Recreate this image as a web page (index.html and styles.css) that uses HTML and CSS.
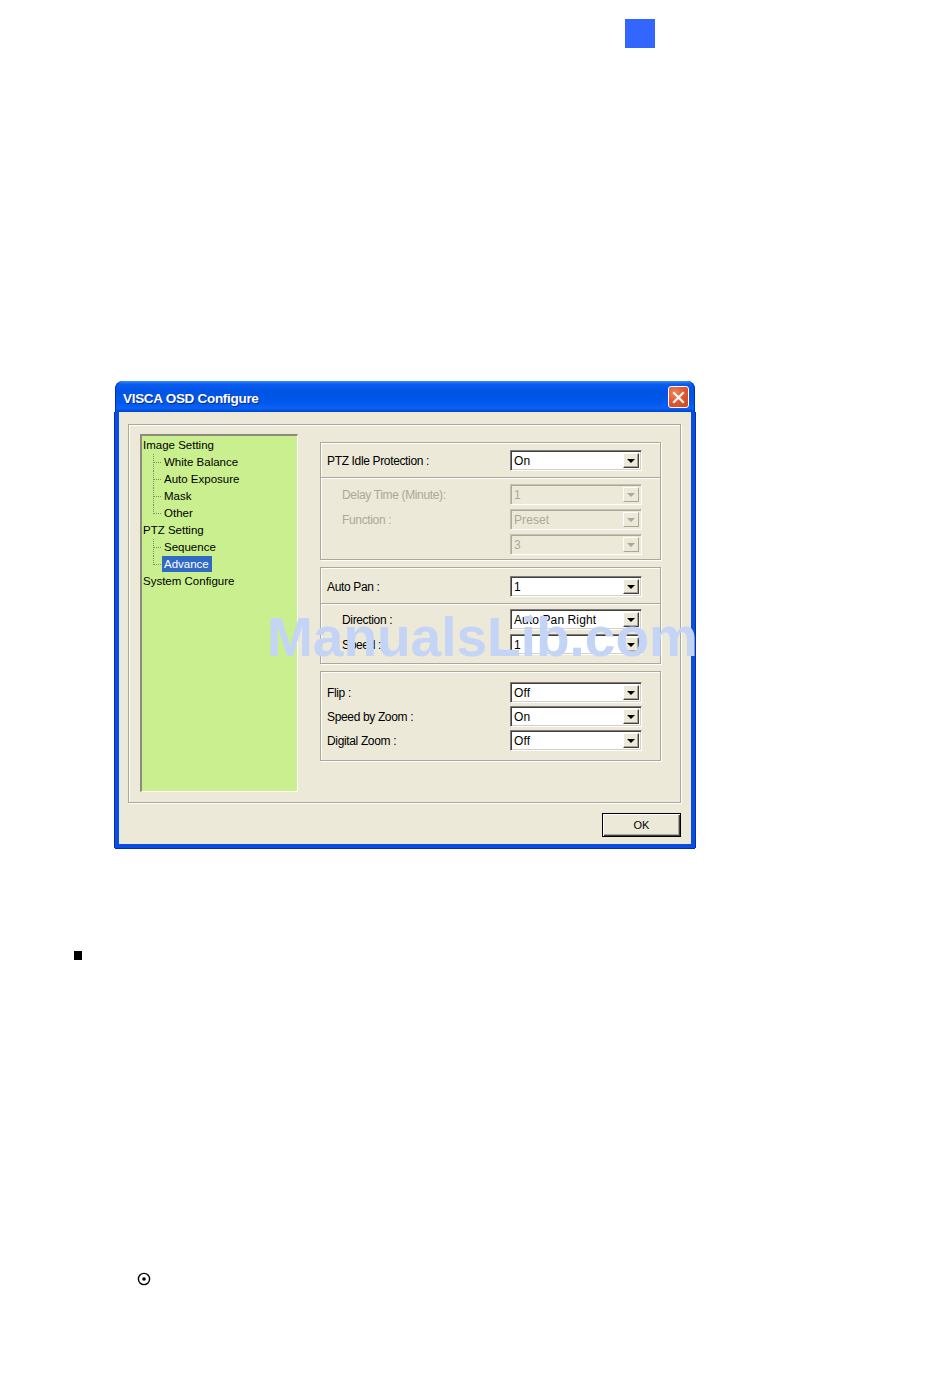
FILE: index.html
```html
<!DOCTYPE html>
<html>
<head>
<meta charset="utf-8">
<title>VISCA OSD Configure</title>
<link rel="stylesheet" href="styles.css">
</head>
<body>
<div class="page">
  <div class="marker"></div>

  <div class="window">
    <div class="titlebar">
      <span class="title">VISCA OSD Configure</span>
      <span class="close">
        <svg width="13" height="13" viewBox="0 0 13 13"><path d="M2 2 L11 11 M11 2 L2 11" stroke="#fff" stroke-width="2.2" stroke-linecap="square"/></svg>
      </span>
    </div>
    <div class="wbody">
      <div class="frame">
        <ul class="tree">
          <li class="node">Image Setting</li>
          <li class="child">White Balance</li>
          <li class="child">Auto Exposure</li>
          <li class="child">Mask</li>
          <li class="child last">Other</li>
          <li class="node">PTZ Setting</li>
          <li class="child">Sequence</li>
          <li class="child last"><span class="sel">Advance</span></li>
          <li class="node">System Configure</li>
        </ul>

        <div class="groups">
          <div class="group g1">
            <div class="section s-top">
              <div class="row"><span class="label">PTZ Idle Protection :</span><div class="combo"><span class="val">On</span><span class="btn"><i class="arrow"></i></span></div></div>
            </div>
            <div class="sep"></div>
            <div class="section s-sub">
              <div class="row dis"><span class="label sub">Delay Time (Minute):</span><div class="combo"><span class="val">1</span><span class="btn"><i class="arrow"></i></span></div></div>
              <div class="row dis"><span class="label sub">Function :</span><div class="combo"><span class="val">Preset</span><span class="btn"><i class="arrow"></i></span></div></div>
              <div class="row dis"><span class="label sub"></span><div class="combo"><span class="val">3</span><span class="btn"><i class="arrow"></i></span></div></div>
            </div>
          </div>

          <div class="group g2">
            <div class="section s-top2">
              <div class="row"><span class="label">Auto Pan :</span><div class="combo"><span class="val">1</span><span class="btn"><i class="arrow"></i></span></div></div>
            </div>
            <div class="sep"></div>
            <div class="section s-sub2">
              <div class="row"><span class="label sub">Direction :</span><div class="combo"><span class="val">Auto Pan Right</span><span class="btn"><i class="arrow"></i></span></div></div>
              <div class="row"><span class="label sub">Speed :</span><div class="combo"><span class="val">1</span><span class="btn"><i class="arrow"></i></span></div></div>
            </div>
          </div>

          <div class="group g3">
            <div class="section s-g3">
              <div class="row"><span class="label">Flip :</span><div class="combo"><span class="val">Off</span><span class="btn"><i class="arrow"></i></span></div></div>
              <div class="row"><span class="label">Speed by Zoom :</span><div class="combo"><span class="val">On</span><span class="btn"><i class="arrow"></i></span></div></div>
              <div class="row"><span class="label">Digital Zoom :</span><div class="combo"><span class="val">Off</span><span class="btn"><i class="arrow"></i></span></div></div>
            </div>
          </div>
        </div>
      </div>
      <div class="footer">
        <div class="ok">OK</div>
      </div>
    </div>
    <div class="watermark">ManualsLib.com</div>
  </div>

  <div class="bullet"></div>

  <div class="circle-icon">
    <svg width="14" height="14" viewBox="0 0 14 14"><circle cx="7" cy="7" r="5.6" fill="none" stroke="#000" stroke-width="1.4"/><circle cx="7" cy="7" r="1.8" fill="#000"/></svg>
  </div>
</div>
</body>
</html>
```

FILE: styles.css
```css
* { box-sizing: border-box; }

html, body {
  margin: 0;
  padding: 0;
  background: #fff;
}

.page {
  width: 950px;
  height: 1387px;
  overflow: hidden;
  padding-top: 19px;
  font-family: "Liberation Sans", Arial, sans-serif;
}

.marker {
  width: 30px;
  height: 29px;
  margin-left: 625px;
  background: #3366ff;
}

/* ---------- window ---------- */
.window {
  position: relative;
  width: 580px;
  margin-top: 333px;
  margin-left: 115px;
}

.titlebar {
  height: 31px;
  border-radius: 8px 8px 0 0;
  background: linear-gradient(to bottom,
    #3c8dfb 0%, #0a5cf0 10%, #0054e3 35%, #0058ec 70%, #0b62f5 88%, #0052e0 95%, #0042c8 100%);
  display: flex;
  align-items: center;
  justify-content: space-between;
  padding: 0 6px 0 8px;
  box-shadow: inset 1px 0 0 #0030b8, inset -1px 0 0 #0030b8;
}

.title {
  color: #fff;
  font-family: "Liberation Sans", Arial, sans-serif;
  font-weight: bold;
  font-size: 13.5px;
  letter-spacing: -0.3px;
  text-shadow: 1px 1px 0 #0a2a8a;
  margin-top: 3px;
}

.close {
  width: 21px;
  height: 22px;
  border: 1px solid #fff;
  border-radius: 3px;
  background: radial-gradient(circle at 30% 30%, #f0825e 0%, #e35a30 45%, #cc4420 100%);
  display: flex;
  align-items: center;
  justify-content: center;
  margin-top: 1px;
}

.wbody {
  background: #ece9d8;
  border: 4px solid #0a4ee0;
  border-top: 0;
  height: 436px;
  padding: 12px 10px 0 9px;
  box-shadow: -1px 0 0 #0030b0, 1px 0 0 #0030b0, 0 1px 0 #0030b0;
}

.frame {
  width: 553px;
  height: 379px;
  border: 1px solid #aca899;
  box-shadow: inset 1px 1px 0 #fff, 1px 1px 0 #fff;
  padding: 9px 0 0 11px;
  display: flex;
  gap: 22px;
}

/* ---------- tree ---------- */
.tree {
  list-style: none;
  margin: 0;
  padding: 1px 0 0 1px;
  width: 158px;
  height: 358px;
  flex: none;
  background: #c9ef8e;
  border-style: solid;
  border-width: 2px 1px 1px 2px;
  border-color: #8e8b7d #fff #fff #8e8b7d;
  font-size: 11.5px;
  color: #000;
}

.tree li {
  position: relative;
  height: 17px;
  line-height: 17px;
  white-space: nowrap;
}

.tree .child {
  padding-left: 21px;
}

.tree .child::before {
  content: "";
  position: absolute;
  left: 10px;
  top: 8px;
  width: 8px;
  border-top: 1px dotted #7d8f6a;
}

.tree .child::after {
  content: "";
  position: absolute;
  left: 10px;
  top: 0;
  height: 17px;
  border-left: 1px dotted #7d8f6a;
}

.tree .child.last::after {
  height: 9px;
}

.tree .sel {
  display: inline-block;
  background: #316ac5;
  color: #fff;
  padding: 0 3px 0 2px;
  margin-left: -2px;
  line-height: 16px;
}

/* ---------- groups ---------- */
.groups {
  width: 341px;
  margin-top: 8px;
  display: flex;
  flex-direction: column;
  gap: 7px;
}

.group {
  border: 1px solid #aca899;
  box-shadow: inset 1px 1px 0 #fff, 1px 1px 0 #fff;
}

.g1 { height: 118px; }
.g2 { height: 97px; }
.g3 { height: 90px; }

.sep {
  height: 2px;
  border-top: 1px solid #aca899;
  border-bottom: 1px solid #fff;
}

.section {
  display: flex;
  flex-direction: column;
  gap: 4px;
  padding-left: 6px;
  padding-right: 18px;
}

.s-top  { padding-top: 7px; height: 34px; }
.s-sub  { padding-top: 5px; }
.s-top2 { padding-top: 8px; height: 35px; }
.s-sub2 { padding-top: 4px; }
.s-g3   { padding-top: 10px; gap: 3px; }

.row {
  display: flex;
  align-items: center;
  justify-content: space-between;
  height: 21px;
}

.label {
  font-size: 12px;
  letter-spacing: -0.35px;
  color: #000;
  padding-top: 1px;
}

.label.sub {
  padding-left: 15px;
}

.row.dis .label { color: #aca899; }

.combo {
  width: 132px;
  height: 21px;
  flex: none;
  display: flex;
  align-items: stretch;
  background: #fff;
  border-style: solid;
  border-width: 1px;
  border-color: #7f7d73 #fff #fff #7f7d73;
  box-shadow: inset 1px 1px 0 #404040, inset -1px -1px 0 #d4d0c8;
  padding: 2px;
}

.combo .val {
  flex: 1;
  font-size: 12px;
  letter-spacing: 0.1px;
  line-height: 16px;
  padding-left: 1px;
  color: #000;
  white-space: nowrap;
  overflow: hidden;
}

.combo .btn {
  width: 16px;
  flex: none;
  background: #ece9d8;
  border-style: solid;
  border-width: 1px;
  border-color: #fff #404040 #404040 #fff;
  box-shadow: inset -1px -1px 0 #aca899;
  display: flex;
  align-items: center;
  justify-content: center;
}

.arrow {
  width: 0;
  height: 0;
  border-left: 4px solid transparent;
  border-right: 4px solid transparent;
  border-top: 4px solid #000;
  margin-top: 1px;
}

.row.dis .combo {
  background: #ece9d8;
  border-color: #c5c2b2 #fff #fff #c5c2b2;
  box-shadow: inset 1px 1px 0 #aca899, inset -1px -1px 0 #ece9d8;
}

.row.dis .combo .val { color: #aca899; }
.row.dis .combo .btn { border-color: #fff #aca899 #aca899 #fff; box-shadow: none; }
.row.dis .arrow { border-top-color: #aca899; }

/* ---------- footer ---------- */
.footer {
  display: flex;
  justify-content: flex-end;
  padding-top: 10px;
}

.ok {
  width: 79px;
  height: 24px;
  border: 1px solid #000;
  background: #ece9d8;
  box-shadow: inset 1px 1px 0 #fff, inset -1px -1px 0 #404040, inset -2px -2px 0 #aca899;
  font-size: 11px;
  display: flex;
  align-items: center;
  justify-content: center;
  color: #000;
}

/* ---------- watermark ---------- */
.watermark {
  position: absolute;
  left: 152px;
  top: 229px;
  font-family: "Liberation Sans", Arial, sans-serif;
  font-weight: bold;
  font-size: 55px;
  line-height: 1;
  color: #c3d4f6;
  white-space: nowrap;
  pointer-events: none;
}

/* ---------- below ---------- */
.bullet {
  width: 8px;
  height: 9px;
  background: #000;
  margin-left: 74px;
  margin-top: 103px;
}

.circle-icon {
  width: 14px;
  height: 14px;
  margin-left: 137px;
  margin-top: 312px;
}
.circle-icon svg { display: block; }
```
